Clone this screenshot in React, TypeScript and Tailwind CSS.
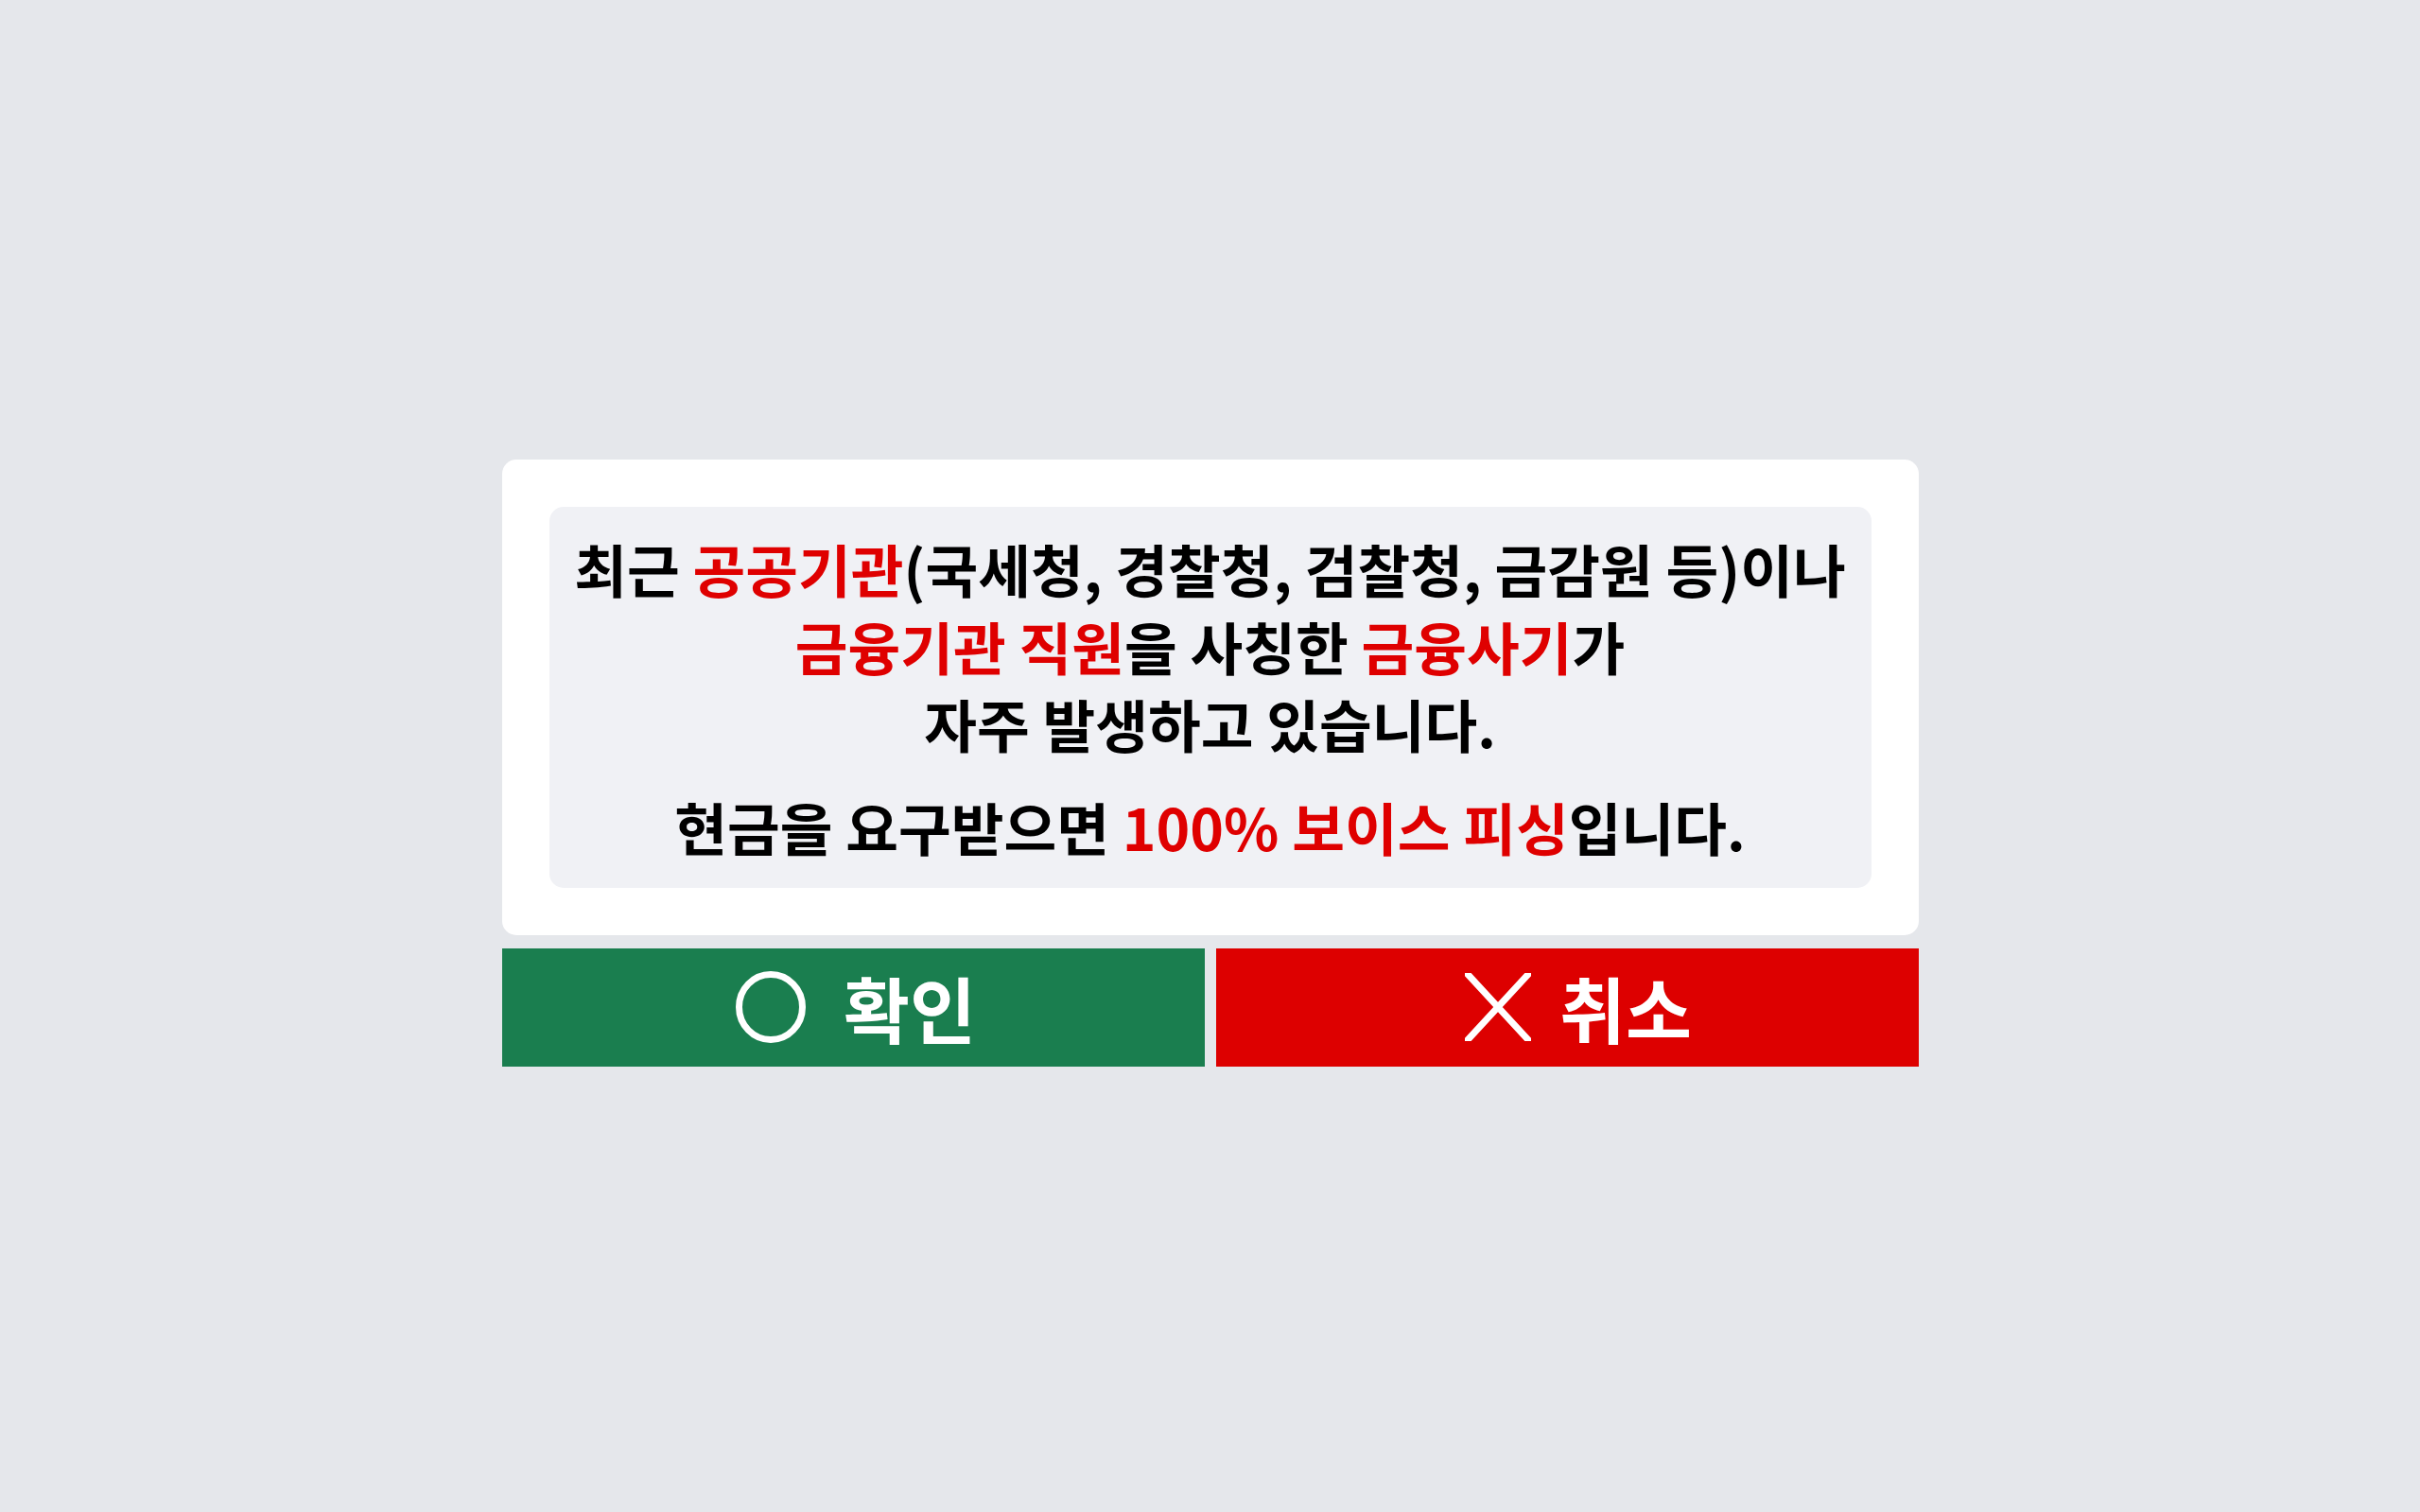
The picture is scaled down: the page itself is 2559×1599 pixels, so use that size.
import React from "react";

const R = ({ children }: { children: React.ReactNode }) => (
  <span className="text-[#df0000]">{children}</span>
);

export default function App() {
  return (
    <div
      className="min-h-screen w-full bg-[#e5e7eb] flex flex-col items-center justify-center pt-[14px]"
      style={{ fontFamily: '"Noto Sans CJK KR", "Noto Sans", sans-serif' }}
    >
      <div className="w-[1498px] flex flex-col gap-[14px]">
        <div className="bg-white rounded-[15px] p-[50px]">
          <div className="bg-[#f0f1f5] rounded-[15px] py-[24px] px-[20px] text-center text-black font-bold text-[60.6px] leading-[82px]">
            <p>
              최근 <R>공공기관</R>(국세청, 경찰청, 검찰청, 금감원 등)이나
              <br />
              <R>금융기관 직원</R>을 사칭한 <R>금융사기</R>가
              <br />
              자주 발생하고 있습니다.
            </p>
            <p className="mt-[27px]">
              현금을 요구받으면 <R>100% 보이스 피싱</R>입니다.
            </p>
          </div>
        </div>
        <div className="flex justify-between h-[125px]">
          <button className="w-[743px] bg-[#1a7e4f] text-white flex items-center justify-center gap-[40px] font-bold text-[76px] pl-[6px]">
            <svg width="74" height="76" viewBox="0 0 74 76" className="shrink-0">
              <ellipse cx="37" cy="38" rx="33.5" ry="34.5" fill="none" stroke="white" strokeWidth="7" />
            </svg>
            <span className="leading-none">확인</span>
          </button>
          <button className="w-[743px] bg-[#dd0000] text-white flex items-center justify-center gap-[30px] font-bold text-[76px] pl-[24px]">
            <svg width="70" height="72" viewBox="0 0 70 72" className="shrink-0">
              <path d="M0 -2 L70 74 M70 -2 L0 74" stroke="white" strokeWidth="7" fill="none" />
            </svg>
            <span className="leading-none">취소</span>
          </button>
        </div>
      </div>
    </div>
  );
}
